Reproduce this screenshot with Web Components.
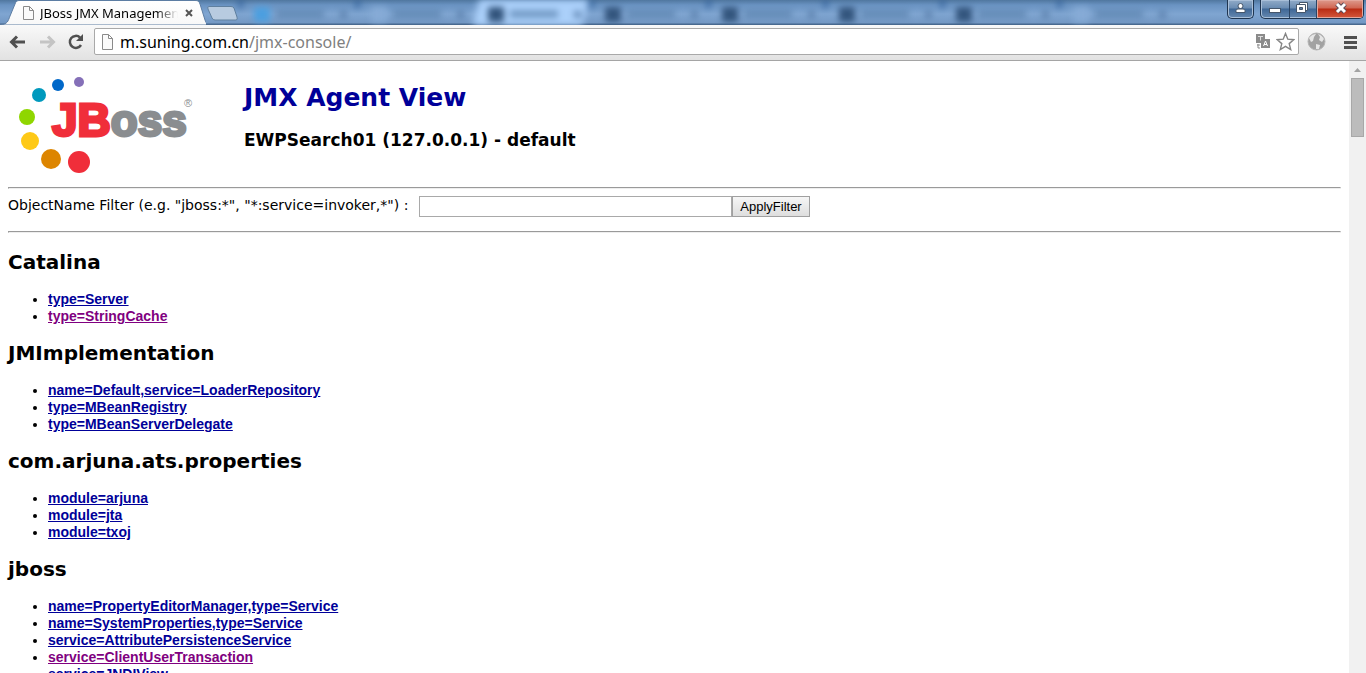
<!DOCTYPE html>
<html lang="en">
<head>
<meta charset="utf-8">
<title>JBoss JMX Management Console</title>
<style>
html, body { height: 100%; margin: 0; }
body { overflow: hidden; background: #fff; font-family: "DejaVu Sans", Verdana, sans-serif; color: #000; }
</style>
</head>
<body>
<browser-window>
  <tab-strip slot="tabs"></tab-strip>
  <address-toolbar slot="toolbar"></address-toolbar>
  <jmx-page></jmx-page>
</browser-window>

<template id="t-window">
<style>
:host { display: flex; flex-direction: column; height: 100vh; }
.view { flex: 1; min-height: 0; display: flex; overflow: hidden; }
main { flex: 1; min-width: 0; overflow: hidden; padding: 8px; }
</style>
<slot name="tabs"></slot>
<slot name="toolbar"></slot>
<div class="view"><main><slot></slot></main><scroll-rail></scroll-rail></div>
</template>

<template id="t-rail">
<style>
:host { display: flex; flex-direction: column; width: 17px; background: #f1f1f1; align-items: center; }
svg { display: block; height: 17px; width: 17px; }
.thumb { width: 11px; height: 57px; background: #bcbcbc; border: 1px solid #a8a8a8; }
</style>
<svg viewBox="0 0 17 17"><path d="M5 11h7L8.500 7z" fill="#a3a3a3"/></svg>
<div class="thumb"></div>
</template>

<template id="t-tabs">
<style>
:host { display: flex; position: relative; height: 25px; flex: none; overflow: hidden;
  background: linear-gradient(#50779f, #6a93c2 5px, #7fa5d1 14px, #7398c4 23px, #48698f 24px); }
.active { position: relative; width: 206px; height: 25px; flex: none; }
.active > svg { position: absolute; inset: 0; }
.label { position: relative; display: flex; align-items: center; height: 25px; padding: 0 10px 0 20px; box-sizing: border-box; }
.title { flex: 1; margin: 0 4px; font: 13px/16px "Noto Sans", sans-serif; white-space: nowrap; overflow: hidden;
  -webkit-mask-image: linear-gradient(90deg, #000 84%, transparent); mask-image: linear-gradient(90deg, #000 84%, transparent); }
button { border: 0; padding: 0; background: none; width: 14px; height: 14px; display: grid; place-items: center; }
.new { width: 32px; height: 25px; flex: none; }
.others { display: flex; flex: 1; min-width: 0; filter: blur(3px); }
.winbtns { position: absolute; right: 2px; top: 0; display: flex; }
</style>
<div class="active">
  <svg width="206" height="25"><defs><linearGradient id="g" x2="0" y2="1"><stop stop-color="#fff"/><stop offset="1" stop-color="#f8f8f8"/></linearGradient></defs><path d="M0 25C8 24 8 21 10 16L15 4C16 1 17 .5 20 .5H195C198 .5 199 1 200 4L205 20C206 23 207 24 209 25Z" fill="url(#g)" stroke="#5c7da3"/></svg>
  <div class="label">
    <svg width="16" height="16" viewBox="0 0 16 16"><path d="M3.500 1.500h6l4 4v9h-10zM9.500 1.500v4h4" fill="#fafafa" stroke="#8a8a8a"/></svg>
    <span class="title">JBoss JMX Management</span>
    <button aria-label="Close tab"><svg width="8" height="8"><path d="M1 1l6 6M7 1l-6 6" stroke="#555" stroke-width="2"/></svg></button>
  </div>
</div>
<svg class="new" width="32" height="25"><path d="M3 6.500H25Q27 6.500 28 8L31 17Q32 20 30 20H9Q7 20 6 18L2 9Q1 6.500 3 6.500Z" fill="#b8cbe0" stroke="#60809f"/></svg>
<div class="others"></div>
<window-buttons class="winbtns"></window-buttons>
</template>

<template id="t-bgtab">
<style>
:host { display: flex; align-items: center; width: 117px; flex: none; box-sizing: border-box; padding: 3px 4px 0 16px; gap: 6px; height: 25px;
  background: radial-gradient(ellipse 8px 10px at 0 2px, #235490, transparent); }
:host([lit]) { background: linear-gradient(105deg, transparent 4px, #abd0fa 10px, #abd0fa 110px, transparent 116px); }
.ic { width: 16px; height: 15px; border-radius: 2px; background: var(--ic, #33557d); flex: none; }
.tx { height: 8px; width: 48px; background: #5279a5; opacity: .6; }
.x { width: 7px; height: 7px; background: #4b719d; margin-left: auto; margin-right: 4px; opacity: .7; }
</style>
<i class="ic"></i><i class="tx"></i><i class="x"></i>
</template>

<template id="t-winbtns">
<style>
:host { display: flex; gap: 6px; height: 19px; }
button { border: 0; padding: 0; background: none; display: block; height: 18px; }
button svg { display: block; }
.grp { display: flex; border: 1px solid #1f3550; border-top: 0; border-radius: 0 0 5px 5px; box-shadow: inset 0 0 0 1px #a9bfd8; overflow: hidden;
  background: linear-gradient(#91abc8, #6a8cb2 8px, #3f6796 9px, #6588b0); }
.grp button + button { border-left: 1px solid #2b4565; }
.close { background: linear-gradient(#dd9a8c, #d06652 8px, #b92c14 9px, #d4583c); box-shadow: inset 0 0 0 1px #e4a79c; }
</style>
<div class="grp"><button aria-label="User"><svg width="25" height="18"><circle cx="12.500" cy="6" r="2.500" fill="#fff" stroke="#45566b"/><path d="M8 12.500v-2q0-1.500 2-1.500h5q2 0 2 1.500v2z" fill="#fff" stroke="#45566b"/></svg></button></div>
<div class="grp"><button aria-label="Minimize"><svg width="28" height="18"><rect x="8.500" y="8.500" width="11" height="4" fill="#fff" stroke="#45566b"/></svg></button><button aria-label="Restore"><svg width="26" height="18"><path d="M9.500 2.500h8v8h-8z" fill="#fff" stroke="#45566b"/><path d="M6.500 4.500h9v8h-9z" fill="#fff" stroke="#45566b"/><path d="M9.500 7.500h3v2h-3z" fill="#5c7da5" stroke="#45566b"/></svg></button><button class="close" aria-label="Close"><svg width="46" height="18"><path d="M20 4l8 8M28 4l-8 8" stroke="#5b4a56" stroke-width="5"/><path d="M20 4l8 8M28 4l-8 8" stroke="#fff" stroke-width="3"/></svg></button></div>
</template>

<template id="t-toolbar">
<style>
:host { display: flex; align-items: center; box-sizing: border-box; height: 36px; flex: none; padding: 0 6px 2px 6px; border-bottom: 1px solid #a5a5a5;
  background: linear-gradient(#f9f9f9, #e2e2e2); }
button { border: 0; padding: 0; background: none; display: block; }
svg { display: block; }
.nav { display: flex; gap: 5px; margin-right: 6px; }
.omni { flex: 1; display: flex; align-items: center; box-sizing: border-box; height: 27px; border: 1px solid #a9a9a9; border-radius: 2px; background: #fff; padding: 0 3px 0 5px; }
.url { flex: 1; margin-left: 5px; font: 16px/22px "Noto Sans", sans-serif; color: #808080; white-space: nowrap; }
.url b { font-weight: 400; color: #000; }
.acts { display: flex; gap: 6px; align-items: center; }
.ext { margin: 0 14px 0 8px; }
</style>
<div class="nav">
<button aria-label="Back"><svg width="24" height="20"><path d="M19 10H6M11 4.500L5.500 10l5.500 5.500" fill="none" stroke="#505050" stroke-width="3"/></svg></button>
<button aria-label="Forward"><svg width="24" height="20"><path d="M5 10H18M13 4.500l5.500 5.500-5.500 5.500" fill="none" stroke="#c4c4c4" stroke-width="3"/></svg></button>
<button aria-label="Reload"><svg width="24" height="20"><path d="M16 5.500A6 6 0 1 0 17 13" fill="none" stroke="#505050" stroke-width="2.500"/><path d="M19 2v7h-7z" fill="#505050"/></svg></button>
</div>
<div class="omni">
<svg width="15" height="18" viewBox="0 0 15 18"><path d="M2.500 1.500h6l4 4v11h-10zM8.500 1.500v4h4" fill="#fafafa" stroke="#8a8a8a"/></svg>
<span class="url"><b>m.suning.com.cn</b>/jmx-console/</span>
<div class="acts">
<button aria-label="Translate"><svg width="14" height="15"><path d="M0 0h9v5H6v4H0zM5 5h9v9H5z" fill="#8b8b8b"/><path d="M2 2.500h5M4.500 2.500v4" stroke="#ddd"/><path d="M7.500 12l2-5 2 5M8 10.500h3" fill="none" stroke="#fff"/><path d="M1 11h3M2 10v4h2" fill="none" stroke="#8b8b8b"/></svg></button>
<button aria-label="Bookmark"><svg width="19" height="19"><path d="M9.500 1.500l2.300 5.700 6 .5-4.600 3.900 1.500 6-5.200-3.200-5.200 3.200 1.500-6L1.200 7.700l6-.5z" fill="#fff" stroke="#858585" stroke-width="1.400"/></svg></button>
</div>
</div>
<button class="ext" aria-label="Extension"><svg width="19" height="19"><circle cx="9.500" cy="9.500" r="8.500" fill="#a2a2a2" stroke="#b5b5b5"/><path d="M2 6q3-4 7-4l-2 3-1 4-2 1zM11 2q4 1 6 5l-2 3-3-2 1-3zM9 12l4 1-1 4-3 0z" fill="#e6e6e6"/></svg></button>
<button aria-label="Menu"><svg width="20" height="14"><path d="M4 2.500h13M4 7.500h13M4 12.500h13" stroke="#505050" stroke-width="3"/></svg></button>
</template>

<template id="t-logo">
<style>:host { display: block; width: 226px; height: 106px; } svg { display: block; }</style>
<svg width="226" height="106" role="img" aria-label="JBoss">
<circle cx="71" cy="13" r="5" fill="#8570b8"/><circle cx="50" cy="16" r="6" fill="#0068c9"/><circle cx="31" cy="26" r="7" fill="#0099bd"/><circle cx="19" cy="48" r="8" fill="#8fd600"/><circle cx="22" cy="72" r="9" fill="#fec917"/><circle cx="43" cy="90" r="10" fill="#dd8500"/><circle cx="71" cy="93" r="11" fill="#f02e3a"/>
<text x="44" y="67" font-family="Liberation Sans, Arial, sans-serif" font-weight="700" stroke-width="3"><tspan font-size="46" fill="#f02e3a" stroke="#f02e3a">JB</tspan><tspan font-size="44" fill="#8a8d90" stroke="#8a8d90">oss</tspan></text>
<text x="176" y="38" font-family="Liberation Sans, Arial, sans-serif" font-size="11" fill="#8a8d90">®</text>
</svg>
</template>

<template id="t-page">
<style>
:host { display: block; }
header { display: flex; }
.titles { padding-left: 10px; }
h1 { margin: 13px 0 0; font-size: 25px; line-height: 32px; color: #009; }
h3 { margin: 14px 0 0; font-size: 17px; line-height: 24px; }
hr { margin: 8px 0 17px; }
header + hr { margin: 12px 0 7px; }
form { display: flex; align-items: flex-start; font-size: 14px; margin-bottom: 14px; }
label { min-width: 411px; line-height: 19px; }
input { width: 313px; height: 21px; box-sizing: border-box; border: 1px solid #a9a9a9; padding: 1px; margin: 0; }
button { height: 21px; width: 78px; border: 1px solid #a0a0a0; background: linear-gradient(#f6f6f6, #dedede); font: 13px/16px "Liberation Sans", Arial, sans-serif; padding: 0; white-space: nowrap; }
</style>
<header><jboss-logo></jboss-logo><div class="titles"><h1>JMX Agent View</h1><h3>EWPSearch01 (127.0.0.1) - default</h3></div></header>
<hr>
<form onsubmit="return false"><label for="filter">ObjectName Filter (e.g. "jboss:*", "*:service=invoker,*") :</label><input id="filter" type="text"><button>ApplyFilter</button></form>
<hr>
<mbean-domain name="Catalina"><mbean-link>type=Server</mbean-link><mbean-link visited>type=StringCache</mbean-link></mbean-domain>
<mbean-domain name="JMImplementation"><mbean-link>name=Default,service=LoaderRepository</mbean-link><mbean-link>type=MBeanRegistry</mbean-link><mbean-link>type=MBeanServerDelegate</mbean-link></mbean-domain>
<mbean-domain name="com.arjuna.ats.properties"><mbean-link>module=arjuna</mbean-link><mbean-link>module=jta</mbean-link><mbean-link>module=txoj</mbean-link></mbean-domain>
<mbean-domain name="jboss"><mbean-link>name=PropertyEditorManager,type=Service</mbean-link><mbean-link>name=SystemProperties,type=Service</mbean-link><mbean-link>service=AttributePersistenceService</mbean-link><mbean-link visited>service=ClientUserTransaction</mbean-link><mbean-link>service=JNDIView</mbean-link></mbean-domain>
</template>

<template id="t-domain">
<style>
:host { display: block; }
h2 { margin: 16px 0; font-size: 20px; line-height: 25px; }
.list { padding-left: 40px; }
</style>
<h2></h2><div class="list" role="list"><slot></slot></div>
</template>

<template id="t-link">
<style>
:host { display: list-item; list-style: disc; font: 700 14px/17px "Liberation Sans", Arial, sans-serif; }
a { color: #009; text-decoration: underline; }
:host([visited]) a { color: #800080; }
</style>
<a href="#"><slot></slot></a>
</template>

<script>
const define = (name, tpl, init) => customElements.define(name, class extends HTMLElement {
  constructor() {
    super();
    this.attachShadow({ mode: "open" }).append(document.getElementById(tpl).content.cloneNode(true));
  }
  connectedCallback() { if (init) init(this, this.shadowRoot); }
});
define("background-tab", "t-bgtab");
define("window-buttons", "t-winbtns");
define("tab-strip", "t-tabs", (el, root) => {
  const icons = ["#4b9fe0", "#86abd6", "", "", "", "", "", "#86abd6"];
  root.querySelector(".others").replaceChildren(...icons.map((c, i) => {
    const t = document.createElement("background-tab");
    if (c) t.style.setProperty("--ic", c);
    if (i === 2) t.setAttribute("lit", "");
    return t;
  }));
});
define("address-toolbar", "t-toolbar");
define("scroll-rail", "t-rail");
define("jboss-logo", "t-logo");
define("mbean-link", "t-link", el => el.setAttribute("role", "listitem"));
define("mbean-domain", "t-domain", (el, root) => { root.querySelector("h2").textContent = el.getAttribute("name"); });
define("jmx-page", "t-page");
define("browser-window", "t-window");
</script>
</body>
</html>
